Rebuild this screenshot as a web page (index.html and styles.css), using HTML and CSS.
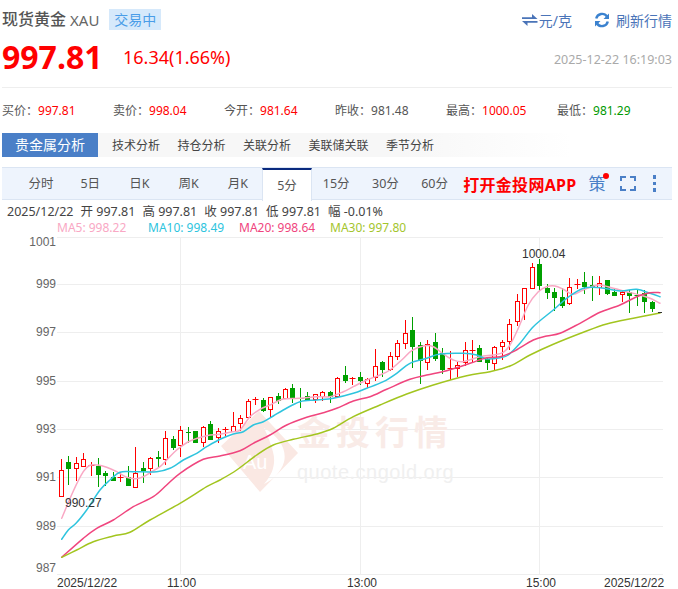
FILE: index.html
```html
<!DOCTYPE html>
<html lang="zh-CN">
<head>
    <meta charset="UTF-8">
    <title>现货黄金 XAU</title>
    <link rel="stylesheet" href="styles.css">
</head>
<body>
    <div class="page">
        <!-- Title -->
        <div class="title-row">
            <h1 class="name">现货黄金</h1>
            <span class="code">XAU</span>
            <span class="status">交易中</span>
            <div class="tools">
                <a class="tool unit">
                    <svg width="16" height="12" viewBox="0 0 16 12"><path d="M10 0 15.500 5H0V3.200H10zM5.500 12 0 7H15.500V8.800H5.500z" fill="#4a74b8"/></svg>
                    元/克
                </a>
                <a class="tool refresh">
                    <svg width="16" height="16" viewBox="0 0 16 16"><path d="M2.200 6.500A6 6 0 0 1 13 4.500M13.800 9.500A6 6 0 0 1 3 11.500" fill="none" stroke="#3b82cf" stroke-width="2.400"/><path d="M15 1.500v5.500H9.500zM1 14.500V9h5.500z" fill="#3b82cf"/></svg>
                    刷新行情
                </a>
            </div>
        </div>

        <!-- Price -->
        <div class="price-row">
            <span class="price">997.81</span>
            <span class="change">16.34(1.66%)</span>
            <span class="time">2025-12-22 16:19:03</span>
        </div>

        <!-- Stats -->
        <ul class="stats">
            <li>买价：<b class="up">997.81</b></li>
            <li>卖价：<b class="up">998.04</b></li>
            <li>今开：<b class="up">981.64</b></li>
            <li>昨收：<b>981.48</b></li>
            <li>最高：<b class="up">1000.05</b></li>
            <li>最低：<b class="down">981.29</b></li>
        </ul>

        <!-- Analysis tabs -->
        <div class="analysis">
            <span class="analysis-title">贵金属分析</span>
            <a>技术分析</a>
            <a>持仓分析</a>
            <a>关联分析</a>
            <a>美联储关联</a>
            <a>季节分析</a>
        </div>

        <!-- Periods -->
        <div class="periods">
            <a>分时</a>
            <a>5日</a>
            <a>日K</a>
            <a>周K</a>
            <a>月K</a>
            <a class="active">5分</a>
            <a>15分</a>
            <a>30分</a>
            <a>60分</a>
            <span class="open-app">打开金投网APP</span>
            <span class="strategy">策<i class="dot"></i></span>
            <svg class="full" width="16" height="15" viewBox="0 0 16 15"><path d="M1 5V1h5M10 1h5v4M15 10v4h-5M6 14H1v-4" fill="none" stroke="#4a7fc7" stroke-width="2"/></svg>
            <div class="more"><i></i><i></i><i></i></div>
        </div>

        <!-- Chart legend -->
        <div class="info">
            <span>2025/12/22</span>
            <span>开 997.81</span>
            <span>高 997.81</span>
            <span>收 997.81</span>
            <span>低 997.81</span>
            <span>幅 -0.01%</span>
        </div>
        <div class="ma">
            <span class="ma5">MA5: 998.22</span>
            <span class="ma10">MA10: 998.49</span>
            <span class="ma20">MA20: 998.64</span>
            <span class="ma30">MA30: 997.80</span>
        </div>

        <svg id="chart" class="chart" width="678" height="354" viewBox="0 235 678 354"></svg>
    </div>
    <script src="chart.js"></script>
</body>
</html>
```

FILE: styles.css
```css
* {
    box-sizing: border-box;
}

body {
    margin: 0;
    background: #fff;
    font-family: "Noto Sans", "Noto Sans CJK SC", sans-serif;
    color: #555;
}

.page {
    width: 678px;
    padding: 0 6px 0 2px;
    overflow: hidden;
}

/* Title */
.title-row {
    display: flex;
    align-items: center;
    height: 21px;
    margin-top: 9px;
}

.name {
    margin: 0;
    font-size: 16px;
    line-height: 21px;
    font-weight: 500;
    color: #555;
}

.code {
    margin-left: 4px;
    font-size: 15px;
    color: #666;
}

.status {
    margin-left: 10px;
    width: 52px;
    height: 21px;
    line-height: 21px;
    text-align: center;
    font-size: 14px;
    background: #d6e9fb;
    color: #4a9de8;
}

.tools {
    display: flex;
    margin-left: auto;
    gap: 22px;
}

.tool {
    display: flex;
    align-items: center;
    font-size: 14px;
    color: #4a74b8;
}

.tool svg {
    margin-right: 1px;
}

.refresh svg {
    margin-right: 6px;
}

/* Price */
.price-row {
    display: flex;
    align-items: center;
    height: 36px;
    margin-top: 9px;
}

.price {
    width: 121px;
    font-size: 32px;
    font-weight: 700;
    color: #f00;
    line-height: 36px;
}

.change {
    font-size: 18px;
    color: #f00;
}

.time {
    margin-left: auto;
    padding-top: 4px;
    font-size: 12.500px;
    color: #aaa;
}

/* Stats */
.stats {
    display: grid;
    grid-template-columns: repeat(6, 111px);
    height: 46px;
    margin: 12px 0 0;
    padding: 14px 0 0;
    list-style: none;
    border-top: 1px solid #eee;
    font-size: 12px;
    line-height: 18px;
}

.stats b {
    font-weight: 400;
}

.up {
    color: #f00;
}

.down {
    color: #090;
}

/* Analysis tabs */
.analysis {
    display: flex;
    align-items: center;
    height: 24px;
    gap: 17.500px;
    font-size: 12px;
    color: #444;
    background: linear-gradient(90deg, #f7f7f7, #f7f7f7 60%, #fff 85%);
}

.analysis-title {
    width: 96px;
    margin-right: -3.500px;
    height: 24px;
    line-height: 24px;
    text-align: center;
    font-size: 14px;
    color: #fff;
    background: #4a7fc7;
}

/* Periods */
.periods {
    display: flex;
    align-items: center;
    position: relative;
    height: 33px;
    margin-top: 10px;
    background: #eef4fd;
    border-top: 1px solid #dbe5f3;
    border-bottom: 1px solid #dbe5f3;
    font-size: 12.500px;
    color: #555;
}

.periods a {
    width: 49.200px;
    height: 32px;
    line-height: 32px;
    text-align: center;
}

.periods a:first-child {
    margin-left: 14.500px;
}

.periods a.active {
    height: 33px;
    margin-top: 1px;
    background: #fff;
    border: 1px solid #dbe5f3;
    border-top: 2px solid #0a2a7e;
    border-bottom: 0;
    line-height: 32px;
}

.open-app {
    margin-left: 4px;
    font-size: 16px;
    font-weight: 700;
    letter-spacing: 0.300px;
    color: #f00;
    white-space: nowrap;
}

.strategy {
    position: relative;
    margin-left: 12px;
    font-size: 17px;
    line-height: 20px;
    color: #4a7fc7;
}

.dot {
    position: absolute;
    top: -1px;
    right: -3px;
    width: 6px;
    height: 6px;
    border-radius: 50%;
    background: #f00;
}

.full {
    margin-left: 14px;
}

.more {
    display: flex;
    flex-direction: column;
    gap: 3px;
    margin-left: 17px;
}

.more i {
    display: block;
    width: 3px;
    height: 3.500px;
    background: #4a7fc7;
}

/* Chart legend */
.info {
    display: flex;
    gap: 7px;
    height: 14px;
    margin: 5px 0 1px 5px;
    font-size: 12.500px;
    line-height: 14px;
    color: #444;
    white-space: nowrap;
}

.ma {
    display: flex;
    height: 15px;
    margin-left: 55px;
    font-size: 12px;
    line-height: 15px;
    white-space: nowrap;
}

.ma span {
    width: 91px;
}

.ma5 {
    color: #f9a8c4;
}

.ma10 {
    color: #2ec4de;
}

.ma20 {
    color: #f0457e;
}

.ma30 {
    color: #a4c52d;
}

/* Chart */
.chart {
    display: block;
    margin-left: -2px;
    font-family: "Liberation Sans", Arial, sans-serif;
    font-size: 12px;
}

.grid {
    stroke: #eee;
    stroke-width: 1;
}

.axis-y {
    fill: #666;
    text-anchor: end;
}

.axis-x {
    fill: #333;
}

.mark {
    fill: #333;
}

.line {
    fill: none;
    stroke-width: 1.500;
    stroke-linejoin: round;
    stroke-linecap: round;
}

.wm-logo {
    fill: #fae8e3;
}

.wm-title {
    fill: #f9ebe7;
    font-family: "Noto Sans CJK SC", sans-serif;
    font-size: 34px;
    font-weight: 700;
    letter-spacing: 5px;
}

.wm-url {
    fill: #f0f0f0;
    font-size: 20px;
    letter-spacing: 0.500px;
}

.wm-au {
    fill: #fff;
    font-size: 20px;
}
```

FILE: chart.js
```js
// 5 minute candles: [type, body top, body bottom, high, low] in chart pixels
const candles = [
    ['r', 470, 495.7, 459, 495.7], ['g', 462.3, 469, 456, 485], ['r', 463.3, 467.7, 457.3, 481], ['r', 459.3, 465.7, 453, 465.7],
    ['r', 465, 465, 461.7, 476], ['g', 465.7, 475, 457.7, 486.7], ['g', 473, 475.7, 471, 485.7], ['g', 477.3, 480.7, 471.7, 480.7],
    ['r', 477.3, 477.3, 471.7, 481.7], ['g', 476.7, 485.7, 466, 485.7], ['r', 472.7, 486.7, 447.3, 486.7], ['g', 468.3, 471, 462, 482.7],
    ['r', 458.3, 467.7, 457.3, 475], ['g', 457, 459, 451, 468.3], ['r', 438.3, 459.3, 431.3, 465], ['g', 439, 448, 435.7, 450],
    ['r', 430.3, 445.3, 426, 457.3], ['g', 432, 432.7, 427.3, 442.7], ['g', 431, 442.7, 431, 443.3], ['r', 427, 442.3, 426, 447.3],
    ['g', 424, 440, 421, 440], ['r', 431.3, 437.3, 428.3, 443.3], ['r', 429.3, 429.3, 427.3, 436], ['r', 425.7, 431, 412.3, 432.3],
    ['r', 418.3, 422.7, 415, 431], ['r', 401, 417.3, 399, 418.3], ['r', 398.7, 398.7, 396.7, 405], ['g', 400, 411, 398.3, 411.7],
    ['r', 397.3, 409.3, 396.7, 417.7], ['g', 396, 401, 392.7, 404], ['r', 389, 398.3, 388.3, 399], ['g', 388.3, 399, 384, 402.7],
    ['g', 398.3, 398.3, 388.3, 408.3], ['g', 396.3, 400.7, 391.7, 401], ['r', 394.3, 399.3, 394.3, 402.7], ['r', 392, 396.3, 391, 400.7],
    ['g', 392, 396.7, 391, 402.7], ['r', 378.3, 396, 376.7, 397.3], ['g', 375, 381, 366, 383.3], ['r', 377.7, 377.7, 376.7, 385],
    ['g', 377, 381, 372.3, 385], ['r', 379.3, 382.7, 377.7, 388.3], ['r', 365.7, 376.7, 349.3, 381], ['g', 362.3, 369.5, 361, 377.3],
    ['r', 355.7, 369.3, 352.3, 371.3], ['r', 343.3, 355.7, 340, 360], ['r', 333.3, 343.3, 320, 349], ['g', 330, 346.7, 317.3, 367.7],
    ['g', 345, 361, 341.7, 384], ['r', 344.3, 361.7, 340, 370], ['g', 342.3, 359, 332.7, 361], ['g', 353.3, 370, 348.3, 374],
    ['r', 368.3, 368.3, 351, 380], ['r', 364.7, 368, 361.7, 376.7], ['r', 350.3, 362.3, 342.3, 365.7], ['r', 350.3, 350.3, 340, 361.7],
    ['g', 348.3, 361.7, 345, 362], ['g', 359.3, 363.3, 356.7, 370], ['r', 346.7, 363.3, 346, 370], ['r', 342.3, 346.3, 340.3, 360],
    ['r', 324.3, 340.7, 319, 350], ['r', 300.7, 321, 294, 325.7], ['r', 288.3, 302.7, 287.7, 320], ['r', 266.7, 287.7, 263.3, 288.3],
    ['g', 264.3, 285.7, 259, 291], ['g', 288.3, 292.7, 284, 299.3], ['g', 292.3, 298.3, 287.7, 311], ['g', 297.3, 305.7, 288.3, 307.7],
    ['r', 286.7, 303.3, 278.3, 305], ['r', 283.7, 283.7, 279.3, 289.3], ['g', 282, 286.7, 271.7, 294.3], ['g', 285, 288.3, 276, 301],
    ['r', 282.7, 286.7, 276, 295], ['g', 280, 294.3, 280, 295], ['g', 291.7, 295.7, 288.3, 296], ['r', 292.3, 294.3, 291, 301.7],
    ['g', 292.3, 296, 290, 313.3], ['g', 295, 295, 290, 305.7], ['g', 292.7, 301.7, 290, 312.7], ['g', 302.3, 309.3, 301, 312.3]
];

const lines = {
    '#f9a8c4': '61.7,518.3 73,491.7 83.3,471.7 90,465.3 98,465 106.7,467.3 116.7,471.7 126.7,477.3 135,478.7 143.3,476.7 151.7,471.7 160,466.7 166.7,460 176.7,450 190,441 206.7,435.7 220,434.3 233.3,431.7 240,430 250,416.7 260,409.3 270,405 283.3,399 300,398.3 316.7,396.7 330,396.7 343.3,391.7 353.3,386.7 366.7,380 380,375 390,370 401.7,360 411.7,350.7 423.3,346 433.3,346.7 443.3,354 453.3,360 463.3,361.7 480,356.7 493.3,355 503.3,352.3 510,345 518.3,328.3 528.3,305 538.3,291.7 546.7,286.7 555,286 563.3,289.3 573.3,294.3 583.3,290 598.3,285 613.3,288.3 626.7,291.7 640,295 650,298.3 660,303.3',
    '#2ec4de': '61.7,539.3 68.3,530 76,523.3 86.7,510 100,490 110,480 120,472.3 133.3,471.7 156.7,471.7 170,468.3 183.3,460 196.7,453.3 206.7,446.7 220,439.3 233.3,434 243.3,431.7 253.3,425 263.3,421.7 273.3,416 283.3,410 300,401.7 316.7,400 333.3,398.3 353.3,393.3 366.7,388.3 383.3,381.7 396.7,373.3 410,363.3 426.7,358.3 440,354 463,353.3 476.7,355 486.7,359 500,357.7 508.3,355 520,343.3 533.3,326.7 553.3,310 566.7,298.3 583.3,288.3 600,287.7 620,291 636.7,289.3 650,293.3 660,296.7',
    '#f0457e': '61.7,557.3 83.3,538.3 96.7,528.3 113.3,520 133.3,506.7 153.3,496.7 166.7,485 180,473.3 203.3,459.3 220,456 240,450.7 253.3,443.3 270,435 286.7,425 306.7,417.3 323.3,412.7 336.7,408.3 353.3,401 370,396.7 386.7,389.3 410,379.3 426.7,375 446.7,370.7 470,363.3 486.7,357.7 500,356.7 513.3,351.7 533.3,340 546.7,336 560,333.3 580,323.3 600,312.3 620,305 636.7,296.7 650,292.7 660,292.7',
    '#a2c51f': '61.7,557.3 76.7,550 93.3,541.7 113.3,536 130,532.3 150,520 180,503.3 206.7,486.7 220,480 236.7,470 256.7,455 273.3,445 293.3,439.3 316.7,434 333.3,428.3 353.3,416.7 380,405 406.7,394 433.3,385 466.7,375.7 490,371.7 510,366 530,355 553.3,344.3 583.3,332.3 606.7,324 633.3,318.3 660,313'
};

const RED = '#f00';
const GREEN = '#00a000';
let html = '';

// Turn the sampled points into a smooth curve
function smooth(str) {
    const p = str.split(' ').map(s => s.split(',').map(Number));
    let d = `M${p[0][0]} ${p[0][1]}`;
    for (let i = 0; i < p.length - 1; i++) {
        const a = p[i - 1] || p[i];
        const b = p[i];
        const c = p[i + 1];
        const e = p[i + 2] || c;
        const c1 = [b[0] + (c[0] - a[0]) / 6, b[1] + (c[1] - a[1]) / 6];
        const c2 = [c[0] - (e[0] - b[0]) / 6, c[1] - (e[1] - b[1]) / 6];
        d += `C${c1[0].toFixed(1)} ${c1[1].toFixed(1)} ${c2[0].toFixed(1)} ${c2[1].toFixed(1)} ${c[0]} ${c[1]}`;
    }
    return d;
}

// grid
[237, 284, 332, 381, 429, 477, 526, 574].forEach(y => {
    html += `<line class="grid" x1="57" x2="663" y1="${y + 0.5}" y2="${y + 0.5}"/>`;
});
[180, 360, 539].forEach(x => {
    html += `<line class="grid" x1="${x + 0.5}" x2="${x + 0.5}" y1="237" y2="574"/>`;
});

// watermark
html += `<path class="wm-logo" fill-rule="evenodd" d="M221 446 259 411 298 453 260 492ZM264 428C280 437 287 450 284 462 281 472 273 480 264 484 273 474 276 463 273 452 271 444 268 436 264 428Z"/>`;
html += `<text class="wm-au" x="243" y="469">Au</text>`;
html += `<text class="wm-title" x="297" y="445">金投行情</text>`;
html += `<text class="wm-url" x="297" y="479">quote.cngold.org</text>`;

// price axis
[[1001, 246], [999, 288], [997, 336], [995, 385], [993, 433], [991, 481], [989, 530], [987, 572]].forEach(([label, y]) => {
    html += `<text class="axis-y" x="56" y="${y}">${label}</text>`;
});

// time axis
html += `<text class="axis-x" x="57" y="587">2025/12/22</text>`;
html += `<text class="axis-x" x="167" y="587">11:00</text>`;
html += `<text class="axis-x" x="347" y="587">13:00</text>`;
html += `<text class="axis-x" x="526" y="587">15:00</text>`;
html += `<text class="axis-x" x="604" y="587">2025/12/22</text>`;

// candles, snapped to whole pixels so the edges stay sharp
candles.forEach((c, i) => {
    const x = Math.round(60.6 + i * 7.48) + 0.5;
    const color = c[0] === 'r' ? RED : GREEN;
    const top = Math.round(c[1]);
    const bottom = Math.round(c[2]);
    html += `<line x1="${x}" x2="${x}" y1="${Math.round(c[3])}" y2="${Math.round(c[4])}" stroke="${color}"/>`;
    if (bottom - top < 1) {
        html += `<line x1="${x - 3}" x2="${x + 3}" y1="${top + 0.5}" y2="${top + 0.5}" stroke="${color}"/>`;
    } else if (c[0] === 'r') {
        html += `<rect x="${x - 2}" y="${top + 0.5}" width="4" height="${bottom - top}" fill="#fff" stroke="${color}"/>`;
    } else {
        html += `<rect x="${x - 2.5}" y="${top}" width="5" height="${bottom - top}" fill="${color}"/>`;
    }
});

// moving averages
Object.keys(lines).forEach(color => {
    html += `<path class="line" stroke="${color}" d="${smooth(lines[color])}"/>`;
});

// high / low marks and last price tick
html += `<text class="mark" x="522" y="258">1000.04</text>`;
html += `<text class="mark" x="65" y="507">990.27</text>`;
html += `<line x1="658" x2="662" y1="312.500" y2="312.500" stroke="#333"/>`;

document.getElementById('chart').innerHTML = html;
```
